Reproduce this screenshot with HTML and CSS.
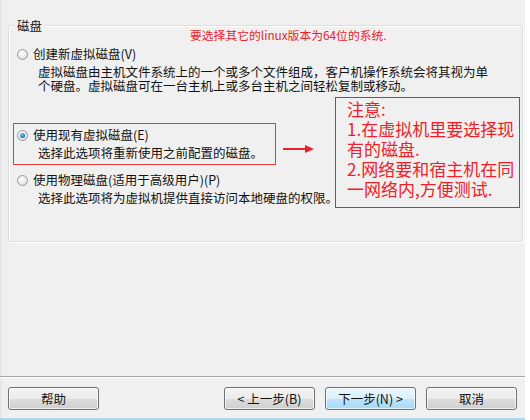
FILE: index.html
```html
<!DOCTYPE html>
<html lang="zh-CN">
<head>
<meta charset="utf-8">
<title>磁盘</title>
<link rel="stylesheet" href="styles.css">
</head>
<body>
<div class="window">
  <div class="group">
    <div class="group-title">磁盘</div>
    <div class="opt opt-first">
      <div class="opt-row"><span class="radio"></span><span class="label">创建新虚拟磁盘(V)</span></div>
      <div class="desc">虚拟磁盘由主机文件系统上的一个或多个文件组成，客户机操作系统会将其视为单<br>个硬盘。虚拟磁盘可在一台主机上或多台主机之间轻松复制或移动。</div>
    </div>
    <div class="opt opt-second">
      <div class="opt-row"><span class="radio checked"></span><span class="label">使用现有虚拟磁盘(E)</span></div>
      <div class="desc">选择此选项将重新使用之前配置的磁盘。</div>
    </div>
    <div class="opt opt-third">
      <div class="opt-row"><span class="radio"></span><span class="label">使用物理磁盘(适用于高级用户)(P)</span></div>
      <div class="desc">选择此选项将为虚拟机提供直接访问本地硬盘的权限。</div>
    </div>
  </div>
  <div class="separator"></div>
  <div class="buttons">
    <button class="btn">帮助</button>
    <div class="btn-group">
      <button class="btn">&lt; 上一步(B)</button>
      <button class="btn btn-default">下一步(N) &gt;</button>
      <button class="btn">取消</button>
    </div>
  </div>

  <div class="note-top">要选择其它的linux版本为64位的系统.</div>
  <div class="mark-box"></div>
  <svg class="arrow" width="32" height="10" viewBox="0 0 32 10"><path d="M0 5 H24" stroke="#e8232b" stroke-width="2"/><path d="M22 1 L31 5 L22 9 Z" fill="#e8232b"/></svg>
  <div class="note-box">注意:<br>1.在虚拟机里要选择现有的磁盘.<br>2.网络要和宿主机在同一网络内,方便测试.</div>
</div>
</body>
</html>
```
FILE: styles.css
```css
html, body {
  margin: 0;
  padding: 0;
  background: #ffffff;
}
body {
  width: 530px;
  height: 420px;
  overflow: hidden;
  font-family: "Noto Sans CJK SC", "Liberation Sans", sans-serif;
  font-size: 12.5px;
  color: #111111;
}
.window {
  position: relative;
  width: 525px;
  height: 418px;
  background: #f0f0f0;
  border-bottom: 2px solid #a9d9f1;
  display: flex;
  flex-direction: column;
  box-sizing: content-box;
  box-shadow: inset 2px 0 0 #e6e6e6;
}
.group {
  position: relative;
  margin: 25px 0 0 8px;
  width: 505px;
  height: 215px;
  border: 1px solid #d5dfe5;
  box-shadow: inset 1px 1px 0 #ffffff, 1px 1px 0 #ffffff;
  border-radius: 2px;
  padding: 0 0 0 8px;
  box-sizing: content-box;
}
.group-title {
  position: absolute;
  left: 6px;
  top: -8px;
  padding: 0 2px;
  background: #f0f0f0;
  line-height: 16px;
  font-size: 12.5px;
}
.opt-row {
  display: flex;
  align-items: center;
  height: 14px;
  line-height: 14px;
}
.label {
  margin-left: 5px;
  white-space: nowrap;
}
.desc {
  margin-left: 21px;
  margin-top: 4px;
  line-height: 14px;
  white-space: nowrap;
}
.opt-first { margin-top: 21px; }
.opt-second { margin-top: 35px; }
.opt-third { margin-top: 13px; }
.radio {
  width: 11px;
  height: 11px;
  border-radius: 50%;
  box-sizing: border-box;
  border: 1px solid #9a9a9a;
  background: radial-gradient(circle at 40% 35%, #ffffff 0%, #e9e9e9 55%, #cfcfcf 100%);
  flex: none;
  position: relative;
}
.radio.checked::after {
  content: "";
  position: absolute;
  left: 2px;
  top: 2px;
  width: 5px;
  height: 5px;
  border-radius: 50%;
  background: radial-gradient(circle at 40% 35%, #7fc4f5 0%, #1c6fc4 70%, #14509a 100%);
}
.separator {
  margin-top: auto;
  height: 1px;
  background: #a5a5a5;
  box-shadow: 0 1px 0 #ffffff;
}
.buttons {
  display: flex;
  justify-content: space-between;
  padding: 10px 8px 8px 8px;
}
.btn-group {
  display: flex;
  gap: 10px;
}
.btn {
  width: 91px;
  height: 23px;
  padding: 0;
  margin: 0;
  border: 1px solid #707070;
  border-radius: 3px;
  background: linear-gradient(#f3f3f3 0%, #ebebeb 50%, #dddddd 51%, #cfcfcf 100%);
  font-family: "Noto Sans CJK SC", "Liberation Sans", sans-serif;
  font-size: 12.5px;
  color: #111111;
  line-height: 21px;
  box-shadow: inset 0 0 0 1px rgba(255,255,255,0.7);
}
.btn-default {
  border-color: #3c7fb1;
  background: linear-gradient(#eaf6fd 0%, #d9f0fc 50%, #bee6fd 51%, #a7d9f5 100%);
}
.note-top {
  position: absolute;
  left: 190px;
  top: 28px;
  font-size: 11.8px;
  line-height: 14px;
  color: #e8232b;
  white-space: nowrap;
}
.mark-box {
  position: absolute;
  left: 13px;
  top: 123px;
  width: 263px;
  height: 42px;
  box-sizing: border-box;
  border: 1px solid #e53a3a;
}
.arrow {
  position: absolute;
  left: 283px;
  top: 144px;
}
.note-box {
  position: absolute;
  left: 335px;
  top: 97px;
  width: 185px;
  height: 111px;
  box-sizing: border-box;
  border: 1px solid #4f4fd8;
  padding: 1px 2px 0 11px;
  font-size: 17px;
  line-height: 20px;
  color: #f0202a;
  word-break: break-all;
}
```
